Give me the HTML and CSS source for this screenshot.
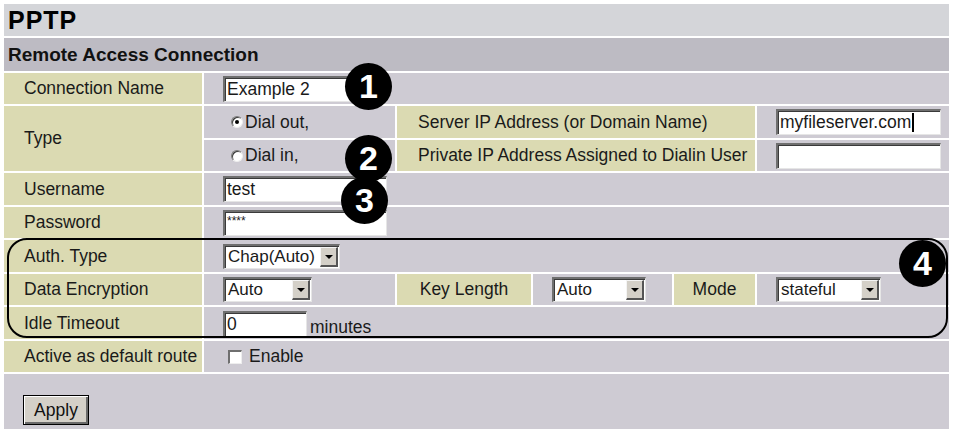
FILE: index.html
```html
<!DOCTYPE html>
<html>
<head>
<meta charset="utf-8">
<link rel="stylesheet" href="styles.css">
</head>
<body>
<div class="panel">
  <div class="title">PPTP</div>
  <div class="section">Remote Access Connection</div>
  <div class="form">
    <div class="lbl">Connection Name</div>
    <div class="val span5"><div class="field w164">Example 2</div></div>

    <div class="lbl type">Type</div>
    <div class="val"><span class="radio on"></span><span class="rtext">Dial out,</span></div>
    <div class="lbl2 span3">Server IP Address (or Domain Name)</div>
    <div class="val"><div class="field w165">myfileserver.com<span class="caret"></span></div></div>

    <div class="val"><span class="radio"></span><span class="rtext">Dial in,</span></div>
    <div class="lbl2 span3">Private IP Address Assigned to Dialin User</div>
    <div class="val"><div class="field w165"></div></div>

    <div class="lbl">Username</div>
    <div class="val span5"><div class="field w164">test</div></div>

    <div class="lbl">Password</div>
    <div class="val span5"><div class="field w164 pw">****</div></div>

    <div class="lbl">Auth. Type</div>
    <div class="val span5"><div class="select w117"><span class="stext">Chap(Auto)</span><span class="arrow"></span></div></div>

    <div class="lbl">Data Encryption</div>
    <div class="val"><div class="select w89"><span class="stext">Auto</span><span class="arrow"></span></div></div>
    <div class="lbl2 center">Key Length</div>
    <div class="val"><div class="select w94"><span class="stext">Auto</span><span class="arrow"></span></div></div>
    <div class="lbl2 center">Mode</div>
    <div class="val"><div class="select w105"><span class="stext">stateful</span><span class="arrow"></span></div></div>

    <div class="lbl">Idle Timeout</div>
    <div class="val span5 idle"><div class="field w84">0</div><span class="unit">minutes</span></div>

    <div class="lbl">Active as default route</div>
    <div class="val span5"><span class="check"></span><span class="ctext">Enable</span></div>
  </div>
  <div class="actions"><div class="btn">Apply</div></div>

  <div class="group-box"></div>
  <div class="badge b1">1</div>
  <div class="badge b2">2</div>
  <div class="badge b3">3</div>
  <div class="badge b4">4</div>
</div>
</body>
</html>
```
FILE: styles.css
```css
html, body {
  margin: 0;
  padding: 0;
  background: #ffffff;
}
body {
  font-family: "Liberation Sans", Arial, sans-serif;
  color: #1a1a1a;
}
.panel {
  position: relative;
  margin: 4px 0 0 4px;
  width: 945px;
  display: flex;
  flex-direction: column;
  gap: 2px;
  background: #ffffff;
}
.title {
  height: 32px;
  background: #d4d5d9;
  font-weight: bold;
  font-size: 25px;
  letter-spacing: 1px;
  line-height: 33px;
  padding-left: 4px;
  color: #000;
}
.section {
  height: 33px;
  background: #bdbbc3;
  font-weight: bold;
  font-size: 19px;
  line-height: 33px;
  padding-left: 4px;
  color: #111;
}
.form {
  display: grid;
  grid-template-columns: 198px 191px 134px 139px 81px 192px;
  grid-template-rows: 31px 32px 31px 32px 31px 32px 31px 32px 31px;
  gap: 2px;
}
.lbl {
  background: #dbdab2;
  font-size: 17.5px;
  padding-left: 20px;
  display: flex;
  align-items: center;
}
.lbl.type {
  grid-row: span 2;
}
.lbl2 {
  background: #dbdab2;
  font-size: 17.5px;
  padding-left: 21px;
  display: flex;
  align-items: center;
}
.lbl2.center {
  justify-content: center;
  padding-left: 0;
}
.span3 { grid-column: span 3; }
.span5 { grid-column: span 5; }
.val {
  background: #cecbd3;
  display: flex;
  align-items: center;
  padding-left: 19px;
  font-size: 17.5px;
}
.field {
  box-sizing: border-box;
  height: 26px;
  background: #fff;
  border-top: 2px solid #6f6f6f;
  border-left: 2px solid #6f6f6f;
  border-right: 1px solid #e6e6e6;
  border-bottom: 1px solid #e6e6e6;
  box-shadow: inset 1px 1px 0 #3a3a3a;
  font-size: 17.5px;
  line-height: 23px;
  padding-left: 2px;
  white-space: nowrap;
  display: flex;
  align-items: center;
}
.w164 { width: 164px; }
.w165 { width: 165px; }
.w84 { width: 84px; }
.field.pw {
  font-size: 12px;
  align-items: flex-start;
  line-height: 14px;
  padding-top: 2px;
}
.caret {
  display: inline-block;
  width: 2px;
  height: 19px;
  background: #000;
  margin-left: 1px;
}
.idle {
  align-items: flex-end;
  padding-bottom: 2px;
}
.unit {
  margin-left: 3px;
  line-height: 20px;
}
.select {
  box-sizing: border-box;
  height: 25px;
  background: #fff;
  border-top: 2px solid #6f6f6f;
  border-left: 2px solid #6f6f6f;
  border-right: 1px solid #e6e6e6;
  border-bottom: 1px solid #e6e6e6;
  box-shadow: inset 1px 1px 0 #3a3a3a;
  display: flex;
  align-items: center;
  justify-content: space-between;
  padding: 1px 1px 1px 3px;
}
.w117 { width: 117px; }
.w89 { width: 89px; }
.w94 { width: 94px; }
.w105 { width: 105px; }
.stext {
  font-size: 17px;
  white-space: nowrap;
}
.arrow {
  box-sizing: border-box;
  width: 18px;
  height: 20px;
  background: #d4d0c8;
  border-top: 1px solid #f4f4f4;
  border-left: 1px solid #f4f4f4;
  border-right: 2px solid #555;
  border-bottom: 2px solid #555;
  position: relative;
  flex: none;
}
.arrow::after {
  content: "";
  position: absolute;
  left: 4px;
  top: 7px;
  border-left: 4px solid transparent;
  border-right: 4px solid transparent;
  border-top: 4px solid #000;
}
.radio {
  box-sizing: border-box;
  width: 12px;
  height: 12px;
  border-radius: 50%;
  background: #fff;
  border: 1px solid;
  border-color: #7a7a7a #eee #eee #7a7a7a;
  box-shadow: inset 1px 1px 0 #3a3a3a;
  margin-left: 8px;
  position: relative;
}
.radio.on::after {
  content: "";
  position: absolute;
  left: 3px;
  top: 3px;
  width: 4px;
  height: 4px;
  border-radius: 50%;
  background: #000;
}
.rtext {
  margin-left: 2px;
}
.check {
  box-sizing: border-box;
  width: 14px;
  height: 14px;
  background: #fff;
  border-top: 2px solid #6f6f6f;
  border-left: 2px solid #6f6f6f;
  border-right: 1px solid #eee;
  border-bottom: 1px solid #eee;
  margin-left: 5px;
}
.ctext {
  margin-left: 7px;
}
.actions {
  height: 55px;
  background: #cecbd3;
  display: flex;
  align-items: flex-end;
  padding: 0 0 4px 19px;
  box-sizing: border-box;
}
.btn {
  box-sizing: border-box;
  width: 66px;
  height: 30px;
  background: #d4d0c8;
  border: 1px solid #000;
  box-shadow: inset 1px 1px 0 #fff, inset -2px -2px 0 #6a6a6a;
  font-size: 17.5px;
  display: flex;
  align-items: center;
  justify-content: center;
  color: #111;
}
.group-box {
  position: absolute;
  left: 3px;
  top: 234px;
  width: 941px;
  height: 100px;
  box-sizing: border-box;
  border: 2.5px solid #000;
  border-radius: 20px;
  pointer-events: none;
}
.badge {
  position: absolute;
  width: 47px;
  height: 47px;
  border-radius: 50%;
  background: #000;
  color: #fff;
  font-weight: bold;
  font-size: 34px;
  line-height: 47px;
  text-align: center;
}
.b1 { left: 341px; top: 59px; }
.b2 { left: 341px; top: 131px; }
.b3 { left: 337px; top: 173px; }
.b4 { left: 895px; top: 236px; }
```
